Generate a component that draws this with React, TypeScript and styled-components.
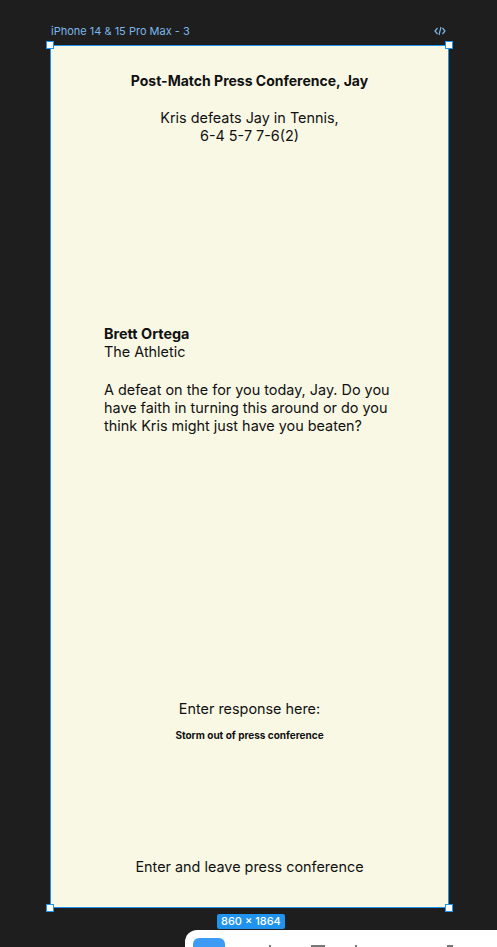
import React from 'react';
import styled, { createGlobalStyle } from 'styled-components';

const GlobalStyle = createGlobalStyle`
    html, body {
        margin: 0;
        padding: 0;
        background: #1e1e1e;
        height: 100%;
        overflow: hidden;
    }
    body {
        font-family: Inter, "Liberation Sans", sans-serif;
    }
`;

const Canvas = styled.div`
    position: relative;
    width: 497px;
    height: 947px;
    padding: 24px 0 0 50px;
    box-sizing: border-box;
    overflow: hidden;
`;

const FrameHeader = styled.div`
    display: flex;
    justify-content: space-between;
    align-items: center;
    width: 399px;
    height: 14px;
    padding: 0 3px 0 1px;
    box-sizing: border-box;
    margin-bottom: 7px;
    font-size: 11px;
    color: #7db6ea;
`;

const CodeIcon = styled.svg`
    width: 12px;
    height: 10px;
`;

const Frame = styled.div`
    position: relative;
    width: 399px;
    height: 863px;
    box-sizing: border-box;
    border: 1px solid #1f93ee;
    background: #f9f8e5;
    color: #111;
    display: flex;
    flex-direction: column;
`;

const Handle = styled.div<{ $x: 'left' | 'right'; $y: 'top' | 'bottom' }>`
    position: absolute;
    width: 6px;
    height: 6px;
    background: #fff;
    border: 1px solid #1f93ee;
    ${(p) => (p.$x === 'left' ? 'left: -5px;' : 'right: -5px;')}
    ${(p) => (p.$y === 'top' ? 'top: -5px;' : 'bottom: -5px;')}
`;

const Centered = styled.div<{ $top: number }>`
    margin-top: ${(p) => p.$top}px;
    text-align: center;
`;

const Title = styled.div`
    font-size: 14px;
    line-height: 18px;
    font-weight: 700;
`;

const Text = styled.div<{ $size?: number; $bold?: boolean; $lh?: number }>`
    font-size: ${(p) => p.$size ?? 14.4}px;
    line-height: ${(p) => p.$lh ?? 18}px;
    font-weight: ${(p) => (p.$bold ? 700 : 400)};
`;

const Question = styled.div`
    margin-top: 180px;
    padding: 0 40px 0 53px;
    display: flex;
    flex-direction: column;
    gap: 20px;
`;

const SizeBadge = styled.div`
    position: absolute;
    left: 217px;
    top: 914px;
    height: 15px;
    padding: 0 4px;
    border-radius: 2px;
    background: #1f93ee;
    color: #fff;
    font-size: 11px;
    line-height: 15px;
    font-weight: 500;
`;

const Toolbar = styled.div`
    position: absolute;
    left: 185px;
    right: 0;
    top: 930px;
    height: 40px;
    background: #fff;
    border-radius: 12px 0 0 0;
    display: flex;
    align-items: flex-start;
    padding: 8px 0 0 8px;
    box-sizing: border-box;
`;

const ToolButton = styled.div`
    width: 32px;
    height: 24px;
    border-radius: 6px;
    background: #3d9bf5;
`;

const ToolMark = styled.div<{ $w: number; $gap: number }>`
    width: ${(p) => p.$w}px;
    height: 2px;
    margin: 7px 0 0 ${(p) => p.$gap}px;
    background: #777;
`;

export default function App() {
    return (
        <>
            <GlobalStyle />
            <Canvas>
                <FrameHeader>
                    <span>iPhone 14 &amp; 15 Pro Max - 3</span>
                    <CodeIcon viewBox="0 0 12 10" fill="none" stroke="#7db6ea" strokeWidth="1.2">
                        <path d="M3.5 2 L1 5 L3.5 8" />
                        <path d="M8.5 2 L11 5 L8.5 8" />
                        <path d="M7 1 L5 9" />
                    </CodeIcon>
                </FrameHeader>
                <Frame>
                    <Handle $x="left" $y="top" />
                    <Handle $x="right" $y="top" />
                    <Handle $x="left" $y="bottom" />
                    <Handle $x="right" $y="bottom" />

                    <Centered $top={26}>
                        <Title>Post-Match Press Conference, Jay</Title>
                    </Centered>
                    <Centered $top={19}>
                        <Text>Kris defeats Jay in Tennis,</Text>
                        <Text>6-4 5-7 7-6(2)</Text>
                    </Centered>

                    <Question>
                        <div>
                            <Text $bold>Brett Ortega</Text>
                            <Text>The Athletic</Text>
                        </div>
                        <Text>
                            A defeat on the for you today, Jay. Do you have faith in turning this around or do you
                            think Kris might just have you beaten?
                        </Text>
                    </Question>

                    <Centered $top={265}>
                        <Text>Enter response here:</Text>
                    </Centered>
                    <Centered $top={11}>
                        <Text $size={10} $lh={13} $bold>
                            Storm out of press conference
                        </Text>
                    </Centered>

                    <Centered $top={116}>
                        <Text>Enter and leave press conference</Text>
                    </Centered>
                </Frame>
                <SizeBadge>860 × 1864</SizeBadge>
                <Toolbar>
                    <ToolButton />
                    <ToolMark $w={2} $gap={44} />
                    <ToolMark $w={14} $gap={40} />
                    <ToolMark $w={2} $gap={30} />
                    <ToolMark $w={6} $gap={90} />
                </Toolbar>
            </Canvas>
        </>
    );
}
